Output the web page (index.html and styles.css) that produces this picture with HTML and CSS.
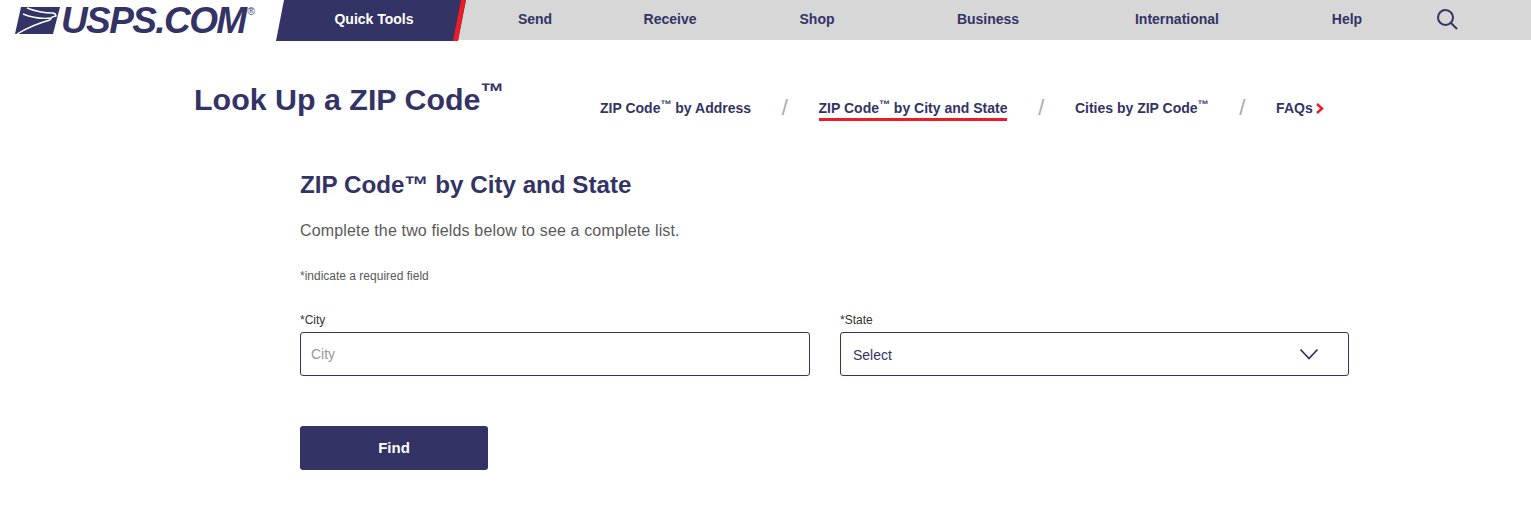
FILE: index.html
```html
<!DOCTYPE html>
<html lang="en">
<head>
<meta charset="utf-8">
<title>Look Up a ZIP Code</title>
<link rel="stylesheet" href="styles.css">
</head>
<body>
<header class="nav">
  <a class="logo" href="#">
    <svg class="eagle" width="45" height="27" viewBox="0 0 45 27" aria-hidden="true">
      <path class="eagle-fill" d="M6 0H45L38 27H0Z"/>
      <path class="eagle-line" d="M2 27C12 21 24 16 35 13"/>
      <path class="eagle-line" d="M8 7C18 11 28 12 36 11"/>
      <path class="eagle-line" d="M12 1C22 5 30 6 38 6C40 6.5 41 7.5 41 9L37 10L35 13"/>
    </svg>
    <span class="wordmark">USPS.COM</span><span class="reg">®</span>
  </a>
  <div class="quick"><span>Quick Tools</span></div>
  <nav class="menu">
    <a href="#">Send</a>
    <a href="#">Receive</a>
    <a href="#">Shop</a>
    <a href="#">Business</a>
    <a href="#">International</a>
    <a href="#">Help</a>
    <a href="#" class="search" aria-label="Search">
      <svg width="22" height="22" viewBox="0 0 22 22"><circle cx="9.5" cy="9.5" r="7.5"/><path d="M15 15L21 21"/></svg>
    </a>
  </nav>
</header>

<main>
  <div class="title-row">
    <h1>Look Up a ZIP Code<sup>™</sup></h1>
    <ul class="tabs">
      <li><a href="#">ZIP Code<sup>™</sup> by Address</a></li>
      <li class="sep">/</li>
      <li><a href="#" class="active">ZIP Code<sup>™</sup> by City and State</a></li>
      <li class="sep">/</li>
      <li><a href="#">Cities by ZIP Code<sup>™</sup></a></li>
      <li class="sep">/</li>
      <li><a href="#">FAQs<svg class="chev" width="8" height="11" viewBox="0 0 8 11"><path d="M1 1L6 5.5L1 10"/></svg></a></li>
    </ul>
  </div>

  <form class="form">
    <h2>ZIP Code™ by City and State</h2>
    <p class="intro">Complete the two fields below to see a complete list.</p>
    <p class="req">*indicate a required field</p>
    <div class="fields">
      <label class="field"><span>*City</span>
        <input type="text" placeholder="City">
      </label>
      <label class="field"><span>*State</span>
        <div class="select">Select
          <svg width="20" height="12" viewBox="0 0 20 12"><path d="M1.5 1.5L10 10.5L18.5 1.5"/></svg>
        </div>
      </label>
    </div>
    <button type="button" class="find">Find</button>
  </form>
</main>
</body>
</html>
```
FILE: styles.css
```css
* { box-sizing: border-box; }
html, body { margin: 0; padding: 0; }
body {
  background: #fff;
  color: #333366;
  font-family: "Liberation Sans", Arial, sans-serif;
  height: 513px;
  overflow: hidden;
}
a { color: inherit; text-decoration: none; }

.nav {
  display: flex;
  height: 40px;
  background: linear-gradient(to right, #fff 285px, #d7d7d7 285px);
}
.logo {
  width: 276px;
  flex: none;
  display: flex;
  align-items: flex-start;
  padding: 7px 0 0 15px;
}
.eagle { flex: none; margin-right: 1px; }
.eagle-fill { fill: #333366; }
.eagle-line { fill: none; stroke: #fff; stroke-width: 1.4; }
.wordmark {
  font-size: 37px;
  line-height: 28px;
  font-weight: 700;
  font-style: italic;
  letter-spacing: -1.6px;
  white-space: nowrap;
}
.reg { font-size: 10px; line-height: 10px; margin-left: 2px; }

.quick {
  flex: none;
  width: 190px;
  height: 41px;
  background: #333366;
  clip-path: polygon(8px 0, 190px 0, 182px 100%, 0 100%);
  display: flex;
  align-items: center;
  justify-content: center;
  color: #fff;
  font-size: 14px;
  font-weight: 700;
  position: relative;
}
.quick::after {
  content: "";
  position: absolute;
  inset: 0;
  background: #ed1c24;
  clip-path: polygon(185px 0, 190px 0, 182px 100%, 177px 100%);
}
.quick span { position: relative; left: 3px; top: -2px; }
.menu {
  margin-left: -1px;
  display: grid;
  grid-template-columns: 140px 130px 164px 178px 200px 140px 60px;
  align-items: center;
  font-size: 14px;
  font-weight: 700;
}
.menu a { text-align: center; padding-bottom: 2px; }
.menu .search { display: flex; justify-content: center; padding: 0 0 2px; }
.search svg { fill: none; stroke: #333366; stroke-width: 2; }

.title-row {
  display: flex;
  align-items: flex-start;
  padding: 40px 0 0 194px;
}
h1 {
  margin: 0;
  font-size: 30.4px;
  line-height: 38px;
  font-weight: 700;
  width: 406px;
  white-space: nowrap;
}
h1 sup { font-size: 24px; line-height: 0; vertical-align: 10px; }
.tabs {
  list-style: none;
  margin: 0;
  padding: 18px 0 0;
  display: flex;
  font-size: 14px;
  font-weight: 700;
  line-height: 20px;
  white-space: nowrap;
}
.tabs a { display: block; height: 21px; }
.tabs sup { font-size: 11px; line-height: 0; vertical-align: 5px; }
.tabs .active { border-bottom: 3px solid #ed1c24; height: 23px; }
.sep {
  font-weight: 400;
  color: #aaa;
  font-size: 22px;
  width: 67.5px;
  text-align: center;
}
.chev { fill: none; stroke: #ed1c24; stroke-width: 2.4; margin-left: 3px; vertical-align: -1px; }

.form { padding: 50px 0 0 300px; width: 1349px; }
h2 {
  margin: 0;
  font-size: 24.2px;
  line-height: 28px;
  font-weight: 700;
}
.intro {
  margin: 22px 0 0;
  font-size: 16px;
  line-height: 20px;
  letter-spacing: 0.15px;
  color: #595959;
}
.req {
  margin: 27px 0 0;
  font-size: 12px;
  line-height: 16px;
  color: #595959;
}
.fields {
  display: grid;
  grid-template-columns: 510px 509px;
  column-gap: 30px;
  margin-top: 29px;
}
.field { display: block; }
.field > span {
  display: block;
  font-size: 12px;
  line-height: 14px;
  color: #333;
  margin-bottom: 5px;
}
.field input, .select {
  display: flex;
  align-items: center;
  justify-content: space-between;
  width: 100%;
  height: 44px;
  border: 1px solid #333366;
  border-radius: 3px;
  background: #fff;
  font-family: inherit;
  font-size: 14px;
  outline: none;
}
.field input { padding: 0 10px; }
.field input::placeholder { color: #999; opacity: 1; }
.select { padding: 2px 29px 0 12px; color: #333366; }
.select svg { fill: none; stroke: #333366; stroke-width: 1.8; margin-top: -2px; }

.find {
  display: block;
  margin-top: 50px;
  width: 188px;
  height: 44px;
  border: 0;
  border-radius: 3px;
  padding: 0 0 2px;
  background: #333366;
  color: #fff;
  font-family: inherit;
  font-size: 15px;
  font-weight: 700;
}
```
